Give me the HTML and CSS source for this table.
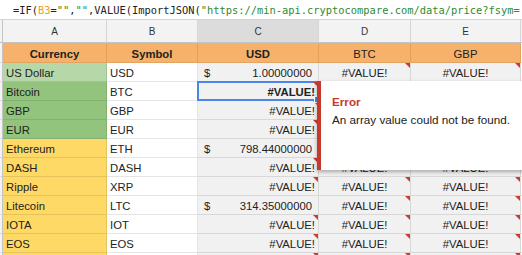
FILE: index.html
```html
<!DOCTYPE html>
<html>
<head>
<meta charset="utf-8">
<link rel="stylesheet" href="styles.css">
</head>
<body>
<div class="formula"><span>=IF(</span><span class="ref">B3</span><span>=</span><span class="str">""</span><span>,</span><span class="str">""</span><span>,VALUE(ImportJSON(</span><span class="str">"https://min-api.cryptocompare.com/data/price?fsym=</span></div>
<div class="sheet">
  <div class="grid">
    <div class="c h rh"></div><div class="c h">A</div><div class="c h">B</div><div class="c h sel">C</div><div class="c h">D</div><div class="c h">E</div><div class="c h"></div>

    <div class="c rh"></div><div class="c o b ctr">Currency</div><div class="c o b ctr">Symbol</div><div class="c o b ctr">USD</div><div class="c o ctr">BTC</div><div class="c o ctr">GBP</div><div class="c w"></div>

    <div class="c rh"></div><div class="c lg">US Dollar</div><div class="c w">USD</div><div class="c g acc"><span>$</span><span>1.00000000</span></div><div class="c g ctr t">#VALUE!</div><div class="c g ctr t">#VALUE!</div><div class="c w"></div>

    <div class="c rh"></div><div class="c dg">Bitcoin</div><div class="c w">BTC</div><div class="c g err t b active">#VALUE!<span class="handle"></span></div><div class="c g ctr"></div><div class="c g ctr"></div><div class="c w"></div>

    <div class="c rh"></div><div class="c dg">GBP</div><div class="c w">GBP</div><div class="c g err t">#VALUE!</div><div class="c g ctr"></div><div class="c g ctr"></div><div class="c w"></div>

    <div class="c rh"></div><div class="c dg">EUR</div><div class="c w">EUR</div><div class="c g err t">#VALUE!</div><div class="c g ctr"></div><div class="c g ctr"></div><div class="c w"></div>

    <div class="c rh"></div><div class="c y">Ethereum</div><div class="c w">ETH</div><div class="c g acc"><span>$</span><span>798.44000000</span></div><div class="c g ctr"></div><div class="c g ctr"></div><div class="c w"></div>

    <div class="c rh"></div><div class="c y">DASH</div><div class="c w">DASH</div><div class="c g err t">#VALUE!</div><div class="c g ctr t">#VALUE!</div><div class="c g ctr t">#VALUE!</div><div class="c w"></div>

    <div class="c rh"></div><div class="c y">Ripple</div><div class="c w">XRP</div><div class="c g err t">#VALUE!</div><div class="c g ctr t">#VALUE!</div><div class="c g ctr t">#VALUE!</div><div class="c w"></div>

    <div class="c rh"></div><div class="c y">Litecoin</div><div class="c w">LTC</div><div class="c g acc"><span>$</span><span>314.35000000</span></div><div class="c g ctr t">#VALUE!</div><div class="c g ctr t">#VALUE!</div><div class="c w"></div>

    <div class="c rh"></div><div class="c y">IOTA</div><div class="c w">IOT</div><div class="c g err t">#VALUE!</div><div class="c g ctr t">#VALUE!</div><div class="c g ctr t">#VALUE!</div><div class="c w"></div>

    <div class="c rh"></div><div class="c y">EOS</div><div class="c w">EOS</div><div class="c g err t">#VALUE!</div><div class="c g ctr t">#VALUE!</div><div class="c g ctr t">#VALUE!</div><div class="c w"></div>

    <div class="c rh"></div><div class="c y"></div><div class="c w"></div><div class="c g err t"></div><div class="c g ctr t"></div><div class="c g ctr t"></div><div class="c w"></div>
  </div>
  <div class="popup">
    <div class="ptitle">Error</div>
    <div class="pmsg">An array value could not be found.</div>
  </div>
</div>
</body>
</html>
```

FILE: styles.css
```css
html, body {
  margin: 0;
  padding: 0;
  background: #ffffff;
}
body {
  width: 522px;
  height: 255px;
  overflow: hidden;
  font-family: "Liberation Sans", Arial, sans-serif;
  color: #222;
}
.formula {
  height: 19px;
  border-bottom: 1px solid #d4d4d4;
  box-sizing: content-box;
  padding-left: 13px;
  font-family: "DejaVu Sans Mono", monospace;
  font-size: 10.4px;
  line-height: 20px;
  white-space: nowrap;
  overflow: hidden;
  color: #222;
}
.formula .ref { color: #f29a1e; }
.formula .str { color: #2f8a33; }

.sheet {
  position: relative;
  height: 235px;
  overflow: hidden;
}
.grid {
  display: grid;
  grid-template-columns: 3px 104px 91px 121px 92px 110px 1fr;
  grid-template-rows: 23px 20px repeat(11, 19px);
}
.c {
  box-sizing: border-box;
  border-right: 1px solid rgba(0, 0, 0, 0.1);
  border-bottom: 1px solid rgba(0, 0, 0, 0.1);
  display: flex;
  align-items: center;
  padding: 2px 3px 0 3px;
  font-size: 11.3px;
  white-space: nowrap;
  overflow: hidden;
  position: relative;
}
.h {
  background: #f3f3f3;
  border-bottom-color: #c4c4c4;
  border-right-color: #d6d6d6;
  justify-content: center;
  font-size: 10px;
  color: #333;
  padding-top: 1px;
}
.h.sel {
  background: #dcdcdc;
}
.rh {
  background: #f3f3f3;
  border-right-color: #c4c4c4;
  padding: 0;
}
.o {
  background: #f6b26b;
  border-right-color: rgba(150, 80, 0, 0.18);
  border-bottom-color: rgba(0, 0, 0, 0.08);
}
.b { font-weight: bold; }
.ctr { justify-content: center; }
.w { background: #ffffff; }
.lg { background: #b6d7a8; }
.dg { background: #93c47d; }
.y { background: #ffd966; }
.g { background: #f1f1f1; }
.acc {
  justify-content: space-between;
  padding-left: 6px;
  padding-right: 6px;
}
.err {
  justify-content: flex-end;
  padding-right: 3px;
}
.t::after {
  content: "";
  position: absolute;
  top: 0;
  right: 0;
  width: 0;
  height: 0;
  border-top: 5px solid #d0392b;
  border-left: 5px solid transparent;
}
.active {
  overflow: visible;
  z-index: 2;
}
.active::before {
  content: "";
  position: absolute;
  top: -1px;
  left: -1px;
  right: -1px;
  bottom: -1px;
  border: 2px solid #4a86e8;
  pointer-events: none;
}
.handle {
  position: absolute;
  right: -3px;
  bottom: -3px;
  width: 5px;
  height: 5px;
  background: #4a86e8;
  border: 1px solid #fff;
}
.popup {
  position: absolute;
  left: 317px;
  top: 61px;
  width: 230px;
  height: 89px;
  box-sizing: border-box;
  background: #ffffff;
  border-left: 4px solid #c9392b;
  box-shadow: 0 2px 4px rgba(0, 0, 0, 0.3);
  padding: 12px 0 0 11px;
  z-index: 5;
  font-size: 11.7px;
  line-height: 18px;
  color: #222;
}
.ptitle {
  color: #c9392b;
  font-weight: bold;
}
```
